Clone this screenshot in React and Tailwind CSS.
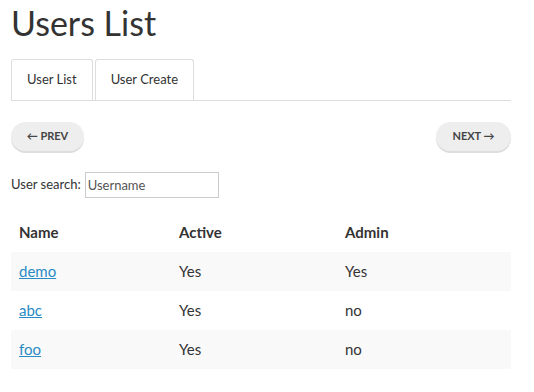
import { useState } from "react";

const users = [
  { name: "demo", active: "Yes", admin: "Yes" },
  { name: "abc", active: "Yes", admin: "no" },
  { name: "foo", active: "Yes", admin: "no" },
];

const App = () => {
  const [search, setSearch] = useState("");

  return (
    <div className="w-[500px] ml-[11px] text-[#333] font-['Lato',sans-serif]">
      <h1 className="text-[34px] leading-[40px] pt-[3px] text-[#333]">Users List</h1>

      <div className="flex gap-[2px] mt-[16px] border-b border-[#ddd]">
        <div className="h-[41px] px-[15px] flex items-center text-[13px] border border-[#ddd] border-b-0 rounded-t-[3px]">
          User List
        </div>
        <div className="h-[41px] px-[15px] flex items-center text-[13px] border border-[#ddd] border-b-0 rounded-t-[3px]">
          User Create
        </div>
      </div>

      <div className="flex justify-between mt-[21px]">
        <button className="h-[29px] w-[73px] rounded-full bg-[#eee] shadow-[0_2px_0_#ddd] text-[11px] font-bold text-[#444]">
          ← PREV
        </button>
        <button className="h-[29px] w-[75px] rounded-full bg-[#eee] shadow-[0_2px_0_#ddd] text-[11px] font-bold text-[#444]">
          NEXT →
        </button>
      </div>

      <div className="flex items-center mt-[21px] text-[13px]">
        <label htmlFor="search" className="mr-[4px]">User search:</label>
        <input
          id="search"
          value={search}
          onChange={(e) => setSearch(e.target.value)}
          placeholder="Username"
          className="w-[134px] h-[26px] border border-[#ccc] px-[2px] text-[13px] placeholder:text-[#555] outline-none"
        />
      </div>

      <table className="w-full mt-[15px] text-[15px] border-collapse">
        <thead>
          <tr className="h-[39px] text-left">
            <th className="w-[160px] px-[8px] font-bold">Name</th>
            <th className="w-[166px] px-[8px] font-bold">Active</th>
            <th className="px-[8px] font-bold">Admin</th>
          </tr>
        </thead>
        <tbody>
          {users.map((u, i) => (
            <tr key={u.name} className={`h-[39px] ${i % 2 === 0 ? "bg-[#f9f9f9]" : "bg-white"}`}>
              <td className="px-[8px]">
                <a href="#" className="text-[#2a8ac5] underline">{u.name}</a>
              </td>
              <td className="px-[8px]">{u.active}</td>
              <td className="px-[8px]">{u.admin}</td>
            </tr>
          ))}
        </tbody>
      </table>
    </div>
  );
};

export default App;
